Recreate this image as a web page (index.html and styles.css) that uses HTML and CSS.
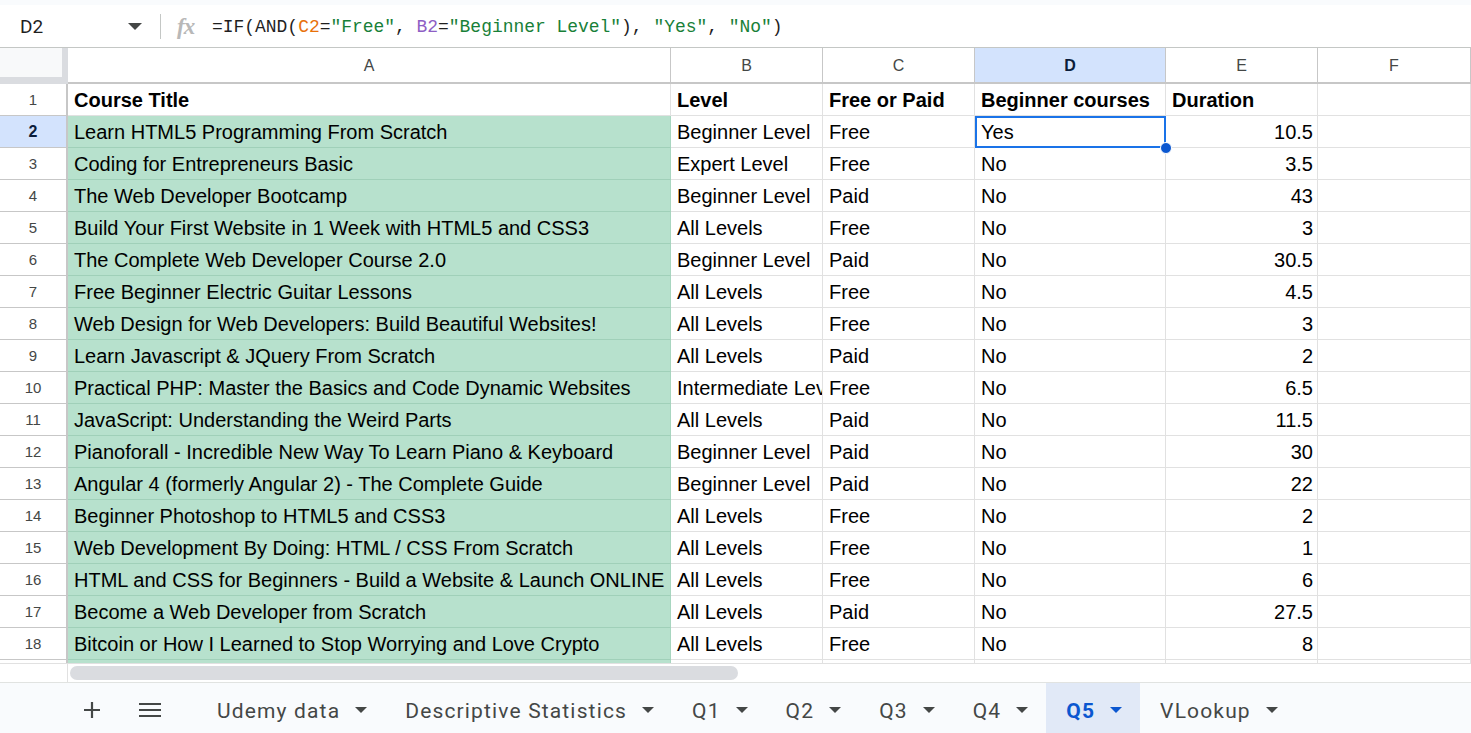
FILE: index.html
```html
<!DOCTYPE html>
<html>
<head>
<meta charset="utf-8">
<link rel="stylesheet" href="styles.css">
</head>
<body>
<div class="app">
  <div class="topstrip"></div>
  <div class="fbar">
    <div class="namebox"><span class="nb-text">D2</span><span class="caret"></span></div>
    <div class="fsep"></div>
    <div class="fx">fx</div>
    <div class="formula">=IF(AND(<span class="r1">C2</span>=<span class="s">"Free"</span>, <span class="r2">B2</span>=<span class="s">"Beginner Level"</span>), <span class="s">"Yes"</span>, <span class="s">"No"</span>)</div>
  </div>
  <div class="sheet">
    <div class="row colhead">
      <div class="corner"></div>
      <div class="ch">A</div><div class="ch">B</div><div class="ch">C</div><div class="ch sel">D</div><div class="ch">E</div><div class="ch">F</div>
    </div>
    <div class="row"><div class="rh">1</div><div class="c b">Course Title</div><div class="c b">Level</div><div class="c b">Free or Paid</div><div class="c b">Beginner courses</div><div class="c b">Duration</div><div class="c"></div></div>
    <div class="row"><div class="rh sel">2</div><div class="c g">Learn HTML5 Programming From Scratch</div><div class="c">Beginner Level</div><div class="c">Free</div><div class="c active">Yes<span class="handle"></span></div><div class="c n">10.5</div><div class="c"></div></div>
    <div class="row"><div class="rh">3</div><div class="c g">Coding for Entrepreneurs Basic</div><div class="c">Expert Level</div><div class="c">Free</div><div class="c">No</div><div class="c n">3.5</div><div class="c"></div></div>
    <div class="row"><div class="rh">4</div><div class="c g">The Web Developer Bootcamp</div><div class="c">Beginner Level</div><div class="c">Paid</div><div class="c">No</div><div class="c n">43</div><div class="c"></div></div>
    <div class="row"><div class="rh">5</div><div class="c g">Build Your First Website in 1 Week with HTML5 and CSS3</div><div class="c">All Levels</div><div class="c">Free</div><div class="c">No</div><div class="c n">3</div><div class="c"></div></div>
    <div class="row"><div class="rh">6</div><div class="c g">The Complete Web Developer Course 2.0</div><div class="c">Beginner Level</div><div class="c">Paid</div><div class="c">No</div><div class="c n">30.5</div><div class="c"></div></div>
    <div class="row"><div class="rh">7</div><div class="c g">Free Beginner Electric Guitar Lessons</div><div class="c">All Levels</div><div class="c">Free</div><div class="c">No</div><div class="c n">4.5</div><div class="c"></div></div>
    <div class="row"><div class="rh">8</div><div class="c g">Web Design for Web Developers: Build Beautiful Websites!</div><div class="c">All Levels</div><div class="c">Free</div><div class="c">No</div><div class="c n">3</div><div class="c"></div></div>
    <div class="row"><div class="rh">9</div><div class="c g">Learn Javascript &amp; JQuery From Scratch</div><div class="c">All Levels</div><div class="c">Paid</div><div class="c">No</div><div class="c n">2</div><div class="c"></div></div>
    <div class="row"><div class="rh">10</div><div class="c g">Practical PHP: Master the Basics and Code Dynamic Websites</div><div class="c">Intermediate Level</div><div class="c">Free</div><div class="c">No</div><div class="c n">6.5</div><div class="c"></div></div>
    <div class="row"><div class="rh">11</div><div class="c g">JavaScript: Understanding the Weird Parts</div><div class="c">All Levels</div><div class="c">Paid</div><div class="c">No</div><div class="c n">11.5</div><div class="c"></div></div>
    <div class="row"><div class="rh">12</div><div class="c g">Pianoforall - Incredible New Way To Learn Piano &amp; Keyboard</div><div class="c">Beginner Level</div><div class="c">Paid</div><div class="c">No</div><div class="c n">30</div><div class="c"></div></div>
    <div class="row"><div class="rh">13</div><div class="c g">Angular 4 (formerly Angular 2) - The Complete Guide</div><div class="c">Beginner Level</div><div class="c">Paid</div><div class="c">No</div><div class="c n">22</div><div class="c"></div></div>
    <div class="row"><div class="rh">14</div><div class="c g">Beginner Photoshop to HTML5 and CSS3</div><div class="c">All Levels</div><div class="c">Free</div><div class="c">No</div><div class="c n">2</div><div class="c"></div></div>
    <div class="row"><div class="rh">15</div><div class="c g">Web Development By Doing: HTML / CSS From Scratch</div><div class="c">All Levels</div><div class="c">Free</div><div class="c">No</div><div class="c n">1</div><div class="c"></div></div>
    <div class="row"><div class="rh">16</div><div class="c g">HTML and CSS for Beginners - Build a Website &amp; Launch ONLINE</div><div class="c">All Levels</div><div class="c">Free</div><div class="c">No</div><div class="c n">6</div><div class="c"></div></div>
    <div class="row"><div class="rh">17</div><div class="c g">Become a Web Developer from Scratch</div><div class="c">All Levels</div><div class="c">Paid</div><div class="c">No</div><div class="c n">27.5</div><div class="c"></div></div>
    <div class="row"><div class="rh">18</div><div class="c g">Bitcoin or How I Learned to Stop Worrying and Love Crypto</div><div class="c">All Levels</div><div class="c">Free</div><div class="c">No</div><div class="c n">8</div><div class="c"></div></div>
    <div class="row"><div class="rh"></div><div class="c g"></div><div class="c"></div><div class="c"></div><div class="c"></div><div class="c"></div><div class="c"></div></div>
  </div>
  <div class="hscroll">
    <div class="hs-left"></div>
    <div class="hs-track"><div class="thumb"></div></div>
  </div>
  <div class="tabbar">
    <div class="tb-icon plus">
      <svg width="20" height="20" viewBox="0 0 20 20"><path d="M10 2v16M2 10h16" stroke="#444746" stroke-width="2.2" fill="none"/></svg>
    </div>
    <div class="tb-icon menu">
      <svg width="24" height="20" viewBox="0 0 24 20"><path d="M1 4h22M1 10h22M1 16h22" stroke="#444746" stroke-width="2.2" fill="none"/></svg>
    </div>
    <div class="tabs">
      <div class="tab">Udemy data<span class="tcaret"></span></div>
      <div class="tab">Descriptive Statistics<span class="tcaret"></span></div>
      <div class="tab">Q1<span class="tcaret"></span></div>
      <div class="tab">Q2<span class="tcaret"></span></div>
      <div class="tab">Q3<span class="tcaret"></span></div>
      <div class="tab">Q4<span class="tcaret"></span></div>
      <div class="tab on">Q5<span class="tcaret"></span></div>
      <div class="tab">VLookup<span class="tcaret"></span></div>
    </div>
  </div>
</div>
</body>
</html>
```
FILE: styles.css
```css
* { box-sizing: border-box; }
html, body { margin: 0; padding: 0; background: #fff; }
body { width: 1471px; height: 733px; overflow: hidden; font-family: "Liberation Sans", Arial, sans-serif; }
.app { display: flex; flex-direction: column; height: 733px; }

.topstrip { height: 5px; background: #f9fbfd; }
.fbar { height: 43px; display: flex; align-items: center; border-bottom: 1px solid #c4c7c5; background: #fff; padding-top: 2px; }
.namebox { width: 160px; display: flex; align-items: center; padding-left: 20px; margin-top: -2px; }
.nb-text { font-family: Roboto, "Liberation Sans", sans-serif; font-size: 19px; color: #1f1f1f; width: 108px; }
.caret { width: 0; height: 0; border-left: 7px solid transparent; border-right: 7px solid transparent; border-top: 7px solid #444746; }
.fsep { width: 1px; height: 25px; background: #c4c7c5; margin-top: -2px; }
.fx { font-family: "Liberation Serif", serif; font-style: italic; font-size: 23px; color: #b8b8b8; margin-left: 16px; width: 35px; font-weight: bold; letter-spacing: -1px; }
.formula { font-family: "Liberation Mono", monospace; font-size: 17.95px; color: #1f1f1f; white-space: pre; }
.formula .r1 { color: #e8710a; }
.formula .r2 { color: #8e5ec4; }
.formula .s { color: #188038; }

.sheet { height: 615px; overflow: hidden; position: relative; }
.row { display: grid; grid-template-columns: 68px 603px 152px 152px 191px 152px 153px; height: 32px; }
.colhead { height: 36px; }
.corner { background: #f8f9fa; border-right: 6px solid #dadce0; border-bottom: 7px solid #dadce0; }
.ch { display: flex; align-items: center; justify-content: center; font-size: 16px; color: #444746; border-right: 1px solid #c7c7c7; border-bottom: 2px solid #c7c7c7; padding-top: 1px; }
.ch.sel { background: #d3e3fd; font-weight: bold; color: #0b1d3a; }
.rh { display: flex; align-items: center; justify-content: center; font-size: 15px; color: #444746; border-right: 2px solid #c7c7c7; border-bottom: 1px solid #c7c7c7; }
.rh.sel { background: #d3e3fd; font-weight: bold; color: #0b1d3a; font-size: 16px; }
.c { font-size: 20px; color: #000; padding: 0 4px 0 6px; display: flex; align-items: center; white-space: nowrap; overflow: hidden; border-right: 1px solid #e1e1e1; border-bottom: 1px solid #e1e1e1; line-height: 1; position: relative; }
.c.b { font-weight: bold; }
.c.n { justify-content: flex-end; }
.c.g { background: #b7e1cd; border-right-color: #a8d6c0; border-bottom-color: #a0d0b9; }
.c.active { overflow: visible; outline: 2px solid #1a73e8; outline-offset: -2px; border: none; z-index: 2; }
.handle { position: absolute; right: -6px; bottom: -6px; width: 12px; height: 12px; border-radius: 50%; background: #0b57d0; border: 1px solid #fff; }

.hscroll { height: 19px; display: flex; border-top: 1px solid #e1e1e1; background: #fff; }
.hs-left { width: 68px; border-right: 1px solid #e1e1e1; }
.hs-track { flex: 1; padding: 2px 0 0 2px; }
.thumb { width: 668px; height: 14px; border-radius: 7px; background: #dadce0; }

.tabbar { height: 51px; border-top: 1px solid #e1e3e1; background: #f9fbfd; display: flex; align-items: stretch; }
.tb-icon { display: flex; align-items: center; justify-content: center; padding-top: 4px; }
.plus { width: 40px; margin-left: 72px; }
.menu { width: 40px; margin-left: 18px; }
.tabs { display: flex; margin-left: 27px; }
.tab { display: flex; align-items: center; padding: 5px 18px 0 20px; font-family: Roboto, "Open Sans", sans-serif; font-size: 21px; color: #444746; letter-spacing: 1.15px; }
.tcaret { width: 0; height: 0; border-left: 6px solid transparent; border-right: 6px solid transparent; border-top: 6px solid #444746; margin-left: 15px; margin-top: -2px; }
.tab.on { background: #e1e9f7; color: #0b57d0; font-weight: bold; }
.tab.on .tcaret { border-top-color: #0b57d0; }
```
